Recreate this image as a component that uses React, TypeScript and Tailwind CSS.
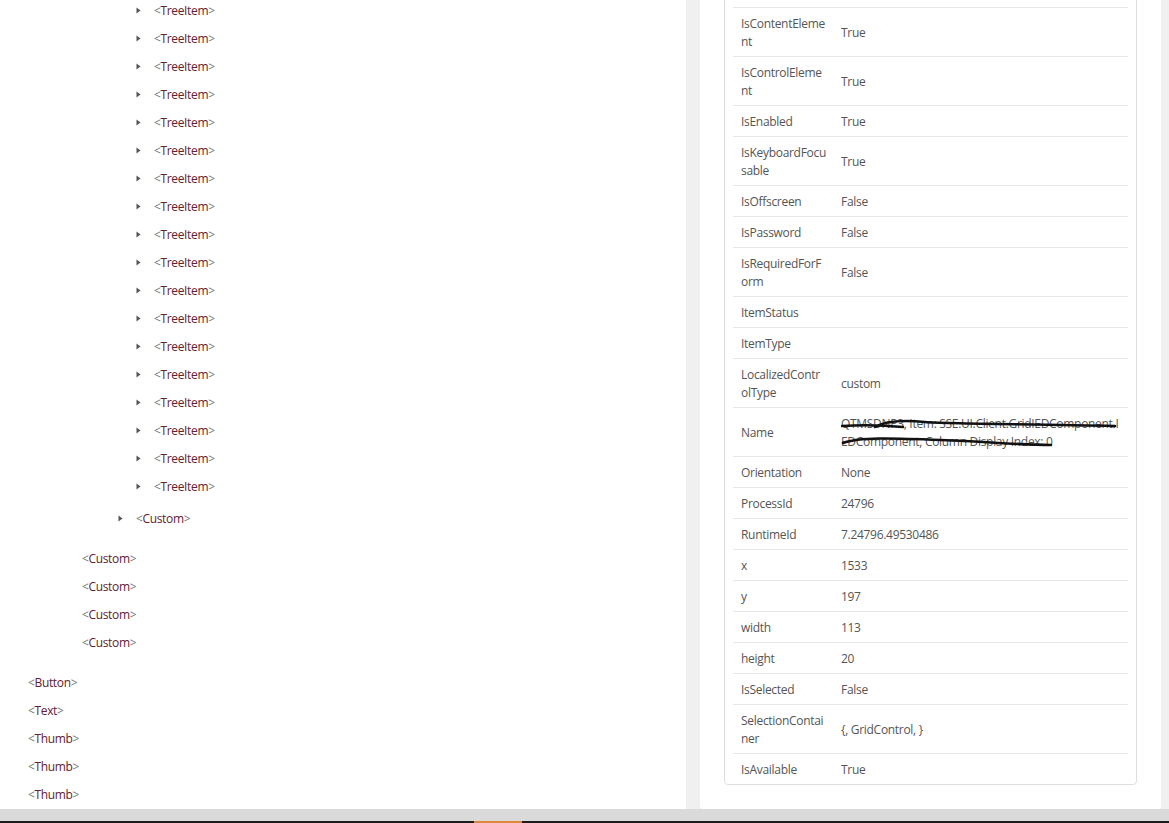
import React from 'react';

type Prop = { key: string; lines: string[]; value: string[] };

const props: Prop[] = [
  { key: 'HelpText', lines: ['\u00a0'], value: [''] },
  { key: 'IsContentElement', lines: ['IsContentEleme', 'nt'], value: ['True'] },
  { key: 'IsControlElement', lines: ['IsControlEleme', 'nt'], value: ['True'] },
  { key: 'IsEnabled', lines: ['IsEnabled'], value: ['True'] },
  { key: 'IsKeyboardFocusable', lines: ['IsKeyboardFocu', 'sable'], value: ['True'] },
  { key: 'IsOffscreen', lines: ['IsOffscreen'], value: ['False'] },
  { key: 'IsPassword', lines: ['IsPassword'], value: ['False'] },
  { key: 'IsRequiredForForm', lines: ['IsRequiredForF', 'orm'], value: ['False'] },
  { key: 'ItemStatus', lines: ['ItemStatus'], value: [''] },
  { key: 'ItemType', lines: ['ItemType'], value: [''] },
  { key: 'LocalizedControlType', lines: ['LocalizedContr', 'olType'], value: ['custom'] },
  {
    key: 'Name',
    lines: ['Name'],
    value: ['QTMSDNP3, Item: SSE.UI.Client.GridIEDComponent.I', 'EDComponent, Column Display Index: 0'],
  },
  { key: 'Orientation', lines: ['Orientation'], value: ['None'] },
  { key: 'ProcessId', lines: ['ProcessId'], value: ['24796'] },
  { key: 'RuntimeId', lines: ['RuntimeId'], value: ['7.24796.49530486'] },
  { key: 'x', lines: ['x'], value: ['1533'] },
  { key: 'y', lines: ['y'], value: ['197'] },
  { key: 'width', lines: ['width'], value: ['113'] },
  { key: 'height', lines: ['height'], value: ['20'] },
  { key: 'IsSelected', lines: ['IsSelected'], value: ['False'] },
  { key: 'SelectionContainer', lines: ['SelectionContai', 'ner'], value: ['{, GridControl, }'] },
  { key: 'IsAvailable', lines: ['IsAvailable'], value: ['True'] },
];

function Caret() {
  return (
    <svg width="5" height="7" viewBox="0 0 5 7" className="shrink-0">
      <path d="M0.5 0.5 L4.5 3.5 L0.5 6.5 Z" fill="#555" />
    </svg>
  );
}

function Tag({ name }: { name: string }) {
  return (
    <span className="whitespace-nowrap">
      <span className="text-[#777]">&lt;</span>
      <span className="text-[#64202e]">{name}</span>
      <span className="text-[#777]">&gt;</span>
    </span>
  );
}

function Row({ name, caret, indent }: { name: string; caret?: boolean; indent: string }) {
  return (
    <div className={`flex h-[28px] items-center ${indent}`}>
      {caret && (
        <span className="flex w-[18px] items-center pb-[1px]">
          <Caret />
        </span>
      )}
      <Tag name={name} />
    </div>
  );
}

export default function App() {
  const treeItems = Array.from({ length: 18 });

  return (
    <div
      className="flex h-[823px] w-full flex-col overflow-hidden bg-[#f0f0f0] text-[12px]"
      style={{ fontFamily: '"Open Sans", "Noto Sans", sans-serif' }}
    >
      <div className="flex h-[809px] shrink-0">
        {/* tree panel */}
        <div className="w-[686px] shrink-0 overflow-hidden bg-white tracking-[-0.35px]">
          <div className="mt-[-3px]">
            {treeItems.map((_, i) => (
              <Row key={i} name="TreeItem" caret indent="pl-[136px]" />
            ))}
            <div className="mt-[4px]">
              <Row name="Custom" caret indent="pl-[118px]" />
            </div>
            <div className="mt-[12px]">
              {[0, 1, 2, 3].map((i) => (
                <Row key={i} name="Custom" indent="pl-[82px]" />
              ))}
            </div>
            <div className="mt-[12px]">
              <Row name="Button" indent="pl-[28px]" />
              <Row name="Text" indent="pl-[28px]" />
              <Row name="Thumb" indent="pl-[28px]" />
              <Row name="Thumb" indent="pl-[28px]" />
              <Row name="Thumb" indent="pl-[28px]" />
            </div>
          </div>
        </div>

        {/* property panel */}
        <div className="ml-[14px] w-[461px] shrink-0 overflow-hidden rounded-b-[3px] bg-white">
          <div className="mx-[24px] mt-[-24px] rounded-[4px] border border-[#dedede] px-[8px] text-[#555] tracking-[-0.3px]">
            {props.map((p, i) => (
              <div
                key={p.key}
                className={`flex items-center pb-[5px] pt-[7px] leading-[18px] ${i > 0 ? 'border-t border-[#e6e6e6]' : ''}`}
              >
                <div className="w-[100px] shrink-0 px-[8px]">
                  {p.lines.map((l) => (
                    <div key={l} className="whitespace-nowrap">
                      {l}
                    </div>
                  ))}
                </div>
                <div className="relative px-[8px]">
                  {p.value.map((v, j) => (
                    <div key={j} className="whitespace-nowrap">
                      {v || '\u00a0'}
                    </div>
                  ))}
                  {p.key === 'Name' && (
                    <svg
                      width="290"
                      height="40"
                      viewBox="0 0 290 40"
                      className="pointer-events-none absolute left-[8px] top-0"
                    >
                      <g fill="none" stroke="#111" strokeWidth="2.6" strokeLinecap="round">
                        <path d="M1 11 C 18 10, 40 10, 62 12" />
                        <path d="M34 12 C 44 6, 62 5, 84 7 S 200 9, 274 11" />
                        <path d="M2 28 C 18 22, 50 23, 100 25 S 180 30, 210 30" />
                      </g>
                    </svg>
                  )}
                </div>
              </div>
            ))}
          </div>
        </div>
      </div>

      {/* bottom scrollbar strip */}
      <div className="h-[12px] shrink-0 bg-[#dadada]" />
      <div className="flex h-[2px] shrink-0 bg-[#1c1c1c]">
        <div className="ml-[474px] w-[48px] bg-[#e0873a]" />
      </div>
    </div>
  );
}
